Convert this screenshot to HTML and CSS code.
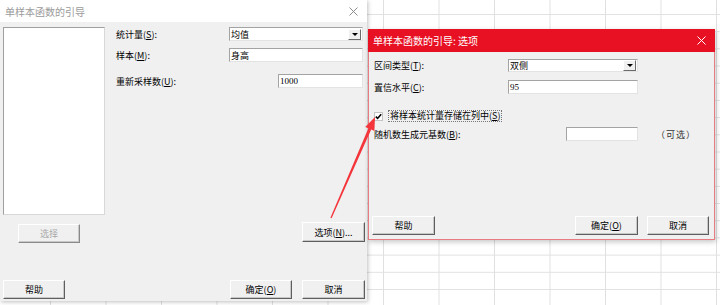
FILE: index.html
```html
<!DOCTYPE html>
<html lang="zh-CN">

<head>
    <meta charset="UTF-8">
    <meta name="viewport" content="width=device-width, initial-scale=1.0">
    <title>单样本函数的引导</title>
    <link rel="stylesheet" href="styles.css">
</head>

<body>
    <!-- 主对话框 -->
    <div class="dlg dlg-main">
        <div class="title">
            <span class="title-text">单样本函数的引导</span>
            <svg class="close" width="9" height="9" viewBox="0 0 9 9">
                <path d="M0.5 0.5L8.5 8.5M8.5 0.5L0.5 8.5" stroke="#8a8a8a" stroke-width="1" fill="none" />
            </svg>
        </div>
        <div class="body main-body">
            <div class="main-area">
                <div class="left-col">
                    <div class="listbox"></div>
                    <button class="btn btn-select" disabled>选择</button>
                </div>
                <div class="right-col">
                    <div class="row row1">
                        <label class="name">统计量(<u>S</u>):</label>
                        <div class="field combo w134"><span class="val">均值</span><span class="drop"></span></div>
                    </div>
                    <div class="row row2">
                        <label class="name">样本(<u>M</u>):</label>
                        <div class="field w134"><span class="val">身高</span></div>
                    </div>
                    <div class="row row3">
                        <label class="name">重新采样数(<u>U</u>):</label>
                        <div class="field w85"><span class="val num">1000</span></div>
                    </div>
                    <button class="btn btn-options">选项(<u>N</u>)...</button>
                </div>
            </div>
            <div class="footer">
                <button class="btn">帮助</button>
                <div class="btn-group">
                    <button class="btn">确定(<u>O</u>)</button>
                    <button class="btn w63">取消</button>
                </div>
            </div>
        </div>
    </div>

    <!-- 选项对话框 -->
    <div class="dlg dlg-opt">
        <div class="title title-red">
            <span class="title-text">单样本函数的引导: 选项</span>
            <svg class="close" width="9" height="9" viewBox="0 0 9 9">
                <path d="M0.5 0.5L8.5 8.5M8.5 0.5L0.5 8.5" stroke="#fff" stroke-width="1" fill="none" />
            </svg>
        </div>
        <div class="body opt-body">
            <div class="row orow1">
                <label class="name oname">区间类型(<u>T</u>):</label>
                <div class="field combo w130"><span class="val">双侧</span><span class="drop"></span></div>
            </div>
            <div class="row orow2">
                <label class="name oname">置信水平(<u>C</u>):</label>
                <div class="field w130"><span class="val num">95</span></div>
            </div>
            <div class="row check-row">
                <span class="checkbox">
                    <svg width="7" height="7" viewBox="0 0 7 7">
                        <path d="M0.8 3.6L2.6 5.4L6.2 1.2" stroke="#000" stroke-width="1.6" fill="none" />
                    </svg>
                </span>
                <label class="check-label">将样本统计量存储在列中(<u>S</u>)</label>
            </div>
            <div class="row orow4">
                <label class="name seed-name">随机数生成元基数(<u>B</u>):</label>
                <div class="field w72"></div>
                <span class="optional">（可选）</span>
            </div>
            <div class="footer opt-footer">
                <button class="btn w63">帮助</button>
                <div class="btn-group gap9">
                    <button class="btn w63">确定(<u>O</u>)</button>
                    <button class="btn w62">取消</button>
                </div>
            </div>
        </div>
    </div>

    <!-- 红色箭头 -->
    <svg class="arrow" width="720" height="305" viewBox="0 0 720 305">
        <polygon points="375,117 374.4,130.9 371.2,129.5 331.6,218.3 330.4,217.7 368.4,128.3 365.2,126.9"
            fill="#f4363c" />
    </svg>
</body>

</html>
```

FILE: styles.css
```css
* {
    box-sizing: border-box;
}

body {
    margin: 0;
    width: 720px;
    height: 305px;
    overflow: hidden;
    position: relative;
    font-family: "Noto Sans CJK SC", "Liberation Sans", sans-serif;
    font-size: 9px;
    color: #000;
    background-color: #fff;
    background-image:
        linear-gradient(to right, #e0e0e0 1px, transparent 1px),
        linear-gradient(to bottom, #e0e0e0 1px, transparent 1px);
    background-size: 55.5px 17.2px;
    background-position: 50px 14px;
}

u {
    text-decoration: underline;
    text-underline-offset: 1px;
}

/* 窗口 */
.dlg {
    position: absolute;
    display: flex;
    flex-direction: column;
    background: #f0f0f0;
}

.dlg-main {
    left: 0;
    top: 0;
    width: 367px;
    height: 301px;
    box-shadow: 1px 1px 4px rgba(0, 0, 0, 0.25);
}

.dlg-opt {
    left: 368px;
    top: 29px;
    width: 347px;
    height: 211px;
    border: 1px solid #e77b82;
    border-top: 0;
    box-shadow: 1px 2px 5px rgba(0, 0, 0, 0.22);
}

.title {
    height: 22px;
    flex: none;
    display: flex;
    align-items: center;
    justify-content: space-between;
    padding: 0 9px 0 5px;
    background: #fff;
}

.title-text {
    font-size: 10px;
    color: #9a9a9a;
}

.title-red {
    height: 23px;
    background: #e81123;
    margin: 0 -1px;
    padding: 0 9px 0 5px;
}

.title-red .title-text {
    color: #fff;
}

.body {
    flex: 1;
    display: flex;
    flex-direction: column;
}

/* 主对话框内容 */
.main-body {
    padding: 0 2px 2px 3px;
}

.main-area {
    height: 258px;
    display: flex;
}

.left-col {
    width: 102px;
    display: flex;
    flex-direction: column;
}

.listbox {
    margin-top: 5px;
    height: 188px;
    background: #fff;
    border: 1px solid;
    border-color: #a0a0a0 #d8d8d8 #d8d8d8 #a0a0a0;
}

.right-col {
    margin-left: 11px;
    flex: 1;
    display: flex;
    flex-direction: column;
}

.row {
    display: flex;
    align-items: center;
    height: 14px;
}

.row1 {
    margin-top: 5px;
}

.row2 {
    margin-top: 7px;
}

.row3 {
    margin-top: 12px;
}

.name {
    width: 113px;
    flex: none;
}

.row3 .name {
    width: 162px;
}

/* 输入框 */
.field {
    height: 14px;
    background: #fff;
    border: 1px solid;
    border-color: #a3a3a3 #e3e3e3 #e3e3e3 #a3a3a3;
    display: flex;
    align-items: center;
    padding-left: 1px;
    line-height: 1;
}

.combo {
    justify-content: space-between;
    padding-right: 1px;
}

.val {
    font-size: 9px;
}

.num {
    font-family: "Liberation Serif", serif;
    font-size: 9px;
}

.drop {
    width: 13px;
    height: 11px;
    background: #f0f0f0;
    border: 1px solid;
    border-color: #fff #6a6a6a #6a6a6a #fff;
    position: relative;
}

.drop::after {
    content: "";
    position: absolute;
    left: 3px;
    top: 3px;
    border-left: 3px solid transparent;
    border-right: 3px solid transparent;
    border-top: 3px solid #000;
}

.w134 {
    width: 134px;
}

.w130 {
    width: 130px;
}

.w85 {
    width: 85px;
}

.w72 {
    width: 72px;
}

/* 按钮 */
.btn {
    width: 62px;
    height: 19px;
    padding: 0;
    font-family: inherit;
    font-size: 9px;
    color: #000;
    background: #f0f0f0;
    border: 1px solid;
    border-color: #fff #5e5e5e #5e5e5e #fff;
    box-shadow: inset -1px -1px 0 #c8c8c8;
    display: flex;
    align-items: center;
    justify-content: center;
}

.btn.btn-select {
    margin: 9px 0 0 15px;
    color: #a8a8a8;
    border-color: #fff #8a8a8a #8a8a8a #fff;
}

.btn.btn-options {
    margin-top: 134px;
    align-self: flex-end;
    width: 63px;
    height: 20px;
}

.w63 {
    width: 63px;
}

.w62 {
    width: 62px;
}

.footer {
    display: flex;
    justify-content: space-between;
    align-items: flex-end;
    flex: 1;
}

.btn-group {
    display: flex;
    gap: 10px;
}

.gap9 {
    gap: 9px;
}

/* 选项对话框内容 */
.opt-body {
    padding: 0 5px 4px 3px;
}

.oname {
    width: 136px;
    padding-left: 2px;
}

.orow1 {
    margin-top: 7px;
    height: 13px;
}

.orow1 .field {
    height: 13px;
}

.orow2 {
    margin-top: 8px;
}

.check-row {
    margin-top: 16px;
    height: 12px;
    padding-left: 2px;
}

.checkbox {
    width: 9px;
    height: 9px;
    background: #fff;
    border: 1px solid #c4c4c4;
    display: flex;
    align-items: center;
    justify-content: center;
}

.check-label {
    margin-left: 5px;
    padding: 0 1px;
    height: 12px;
    line-height: 10px;
    border: 1px dotted #777;
}

.orow4 {
    margin-top: 5px;
}

.seed-name {
    width: 194px;
    padding-left: 2px;
}

.optional {
    margin-left: 18px;
    color: #333;
    letter-spacing: 1px;
}

.opt-footer {
    padding-left: 0;
}

/* 红色箭头 */
.arrow {
    position: absolute;
    left: 0;
    top: 0;
    pointer-events: none;
}
```
